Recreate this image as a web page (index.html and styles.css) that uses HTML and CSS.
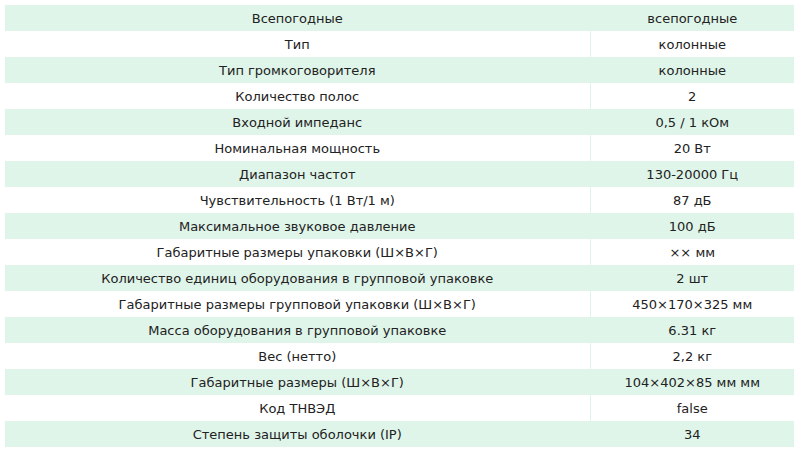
FILE: index.html
```html
<!DOCTYPE html>
<html lang="ru">
<head>
<meta charset="utf-8">
<link rel="stylesheet" href="styles.css">
</head>
<body>
<table class="specs">
<tbody>
<tr><td>Всепогодные</td><td>всепогодные</td></tr>
<tr><td>Тип</td><td>колонные</td></tr>
<tr><td>Тип громкоговорителя</td><td>колонные</td></tr>
<tr><td>Количество полос</td><td>2</td></tr>
<tr><td>Входной импеданс</td><td>0,5 / 1 кОм</td></tr>
<tr><td>Номинальная мощность</td><td>20 Вт</td></tr>
<tr><td>Диапазон частот</td><td>130-20000 Гц</td></tr>
<tr><td>Чувствительность (1 Вт/1 м)</td><td>87 дБ</td></tr>
<tr><td>Максимальное звуковое давление</td><td>100 дБ</td></tr>
<tr><td>Габаритные размеры упаковки (Ш×В×Г)</td><td>×× мм</td></tr>
<tr><td>Количество единиц оборудования в групповой упаковке</td><td>2 шт</td></tr>
<tr><td>Габаритные размеры групповой упаковки (Ш×В×Г)</td><td>450×170×325 мм</td></tr>
<tr><td>Масса оборудования в групповой упаковке</td><td>6.31 кг</td></tr>
<tr><td>Вес (нетто)</td><td>2,2 кг</td></tr>
<tr><td>Габаритные размеры (Ш×В×Г)</td><td>104×402×85 мм мм</td></tr>
<tr><td>Код ТНВЭД</td><td>false</td></tr>
<tr><td>Степень защиты оболочки (IP)</td><td>34</td></tr>
</tbody>
</table>
</body>
</html>
```

FILE: styles.css
```css
html, body {
  margin: 0;
  padding: 0;
  background: #ffffff;
}
body {
  padding: 5px 8px 0 5px;
  font-family: "DejaVu Sans", Verdana, sans-serif;
  font-size: 13px;
  color: #222222;
}
.specs {
  width: 789px;
  border-collapse: collapse;
  table-layout: fixed;
}
.specs td {
  height: 26px;
  padding: 0;
  text-align: center;
  vertical-align: middle;
  border: 1px solid #dff5e9;
  border-top: none;
  border-bottom: none;
  box-sizing: border-box;
}
.specs td:first-child {
  width: 585px;
  border-left: none;
}
.specs td:last-child {
  border-right: none;
}
.specs tr:nth-child(odd) td {
  background: #dff5e9;
}
```
